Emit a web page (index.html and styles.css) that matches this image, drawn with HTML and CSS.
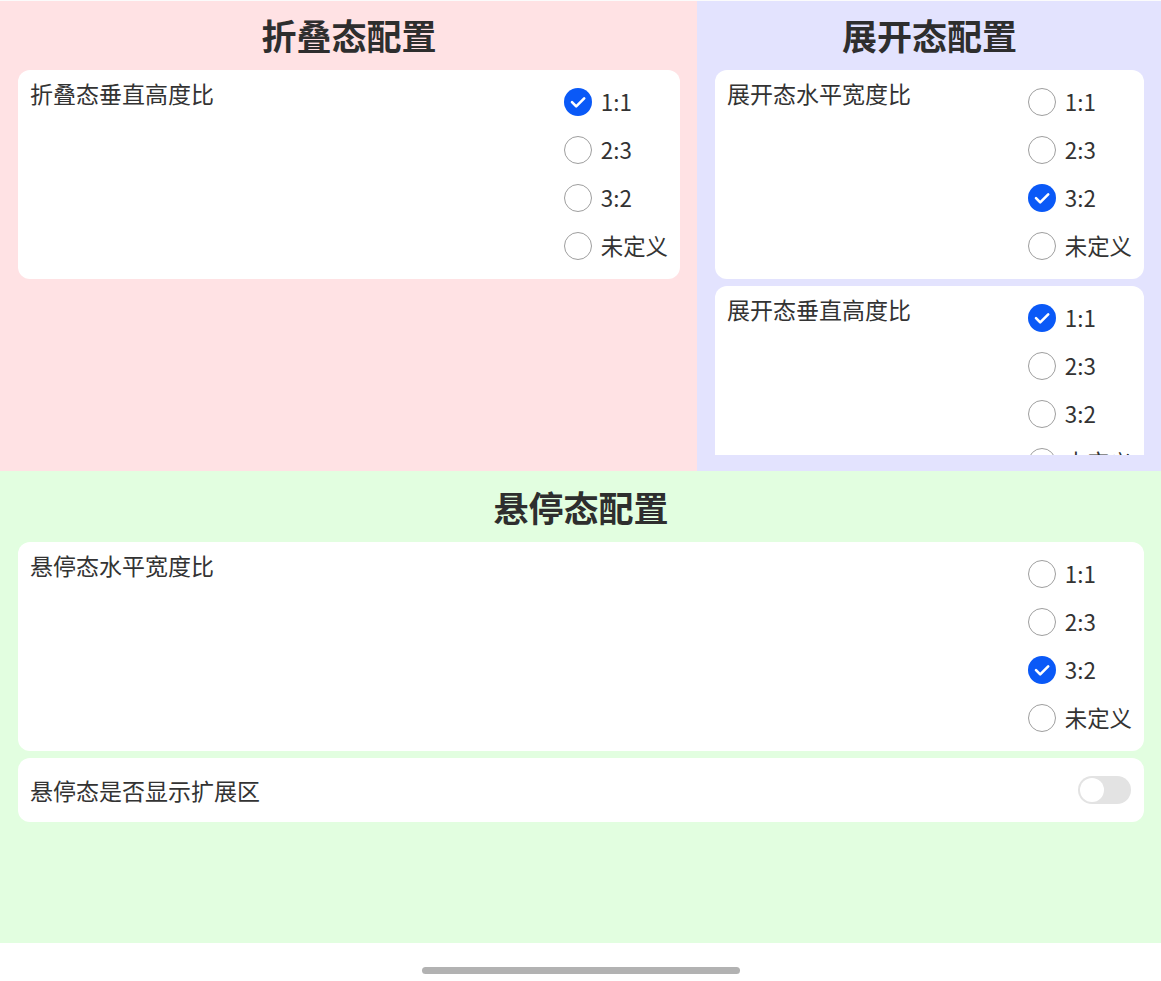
FILE: index.html
```html
<!DOCTYPE html>
<html lang="zh-CN">
<head>
<meta charset="utf-8">
<title>配置</title>
<link rel="stylesheet" href="styles.css">
</head>
<body>
<div class="screen">
  <div class="top">
    <section class="panel fold">
      <h2 class="title">折叠态配置</h2>
      <div class="scroll">
        <div class="card">
          <div class="label">折叠态垂直高度比</div>
          <div class="radios">
            <div class="radio"><span class="dot on"><svg viewBox="0 0 28 28"><circle cx="14" cy="14" r="14" fill="#0a59f7"/><path d="M8 14.2l4.2 4.2 8-8" fill="none" stroke="#fff" stroke-width="2.6" stroke-linecap="round" stroke-linejoin="round"/></svg></span><span class="rtext">1:1</span></div>
            <div class="radio"><span class="dot"></span><span class="rtext">2:3</span></div>
            <div class="radio"><span class="dot"></span><span class="rtext">3:2</span></div>
            <div class="radio"><span class="dot"></span><span class="rtext">未定义</span></div>
          </div>
        </div>
      </div>
    </section>
    <section class="panel expand">
      <h2 class="title">展开态配置</h2>
      <div class="scroll">
        <div class="card">
          <div class="label">展开态水平宽度比</div>
          <div class="radios">
            <div class="radio"><span class="dot"></span><span class="rtext">1:1</span></div>
            <div class="radio"><span class="dot"></span><span class="rtext">2:3</span></div>
            <div class="radio"><span class="dot on"><svg viewBox="0 0 28 28"><circle cx="14" cy="14" r="14" fill="#0a59f7"/><path d="M8 14.2l4.2 4.2 8-8" fill="none" stroke="#fff" stroke-width="2.6" stroke-linecap="round" stroke-linejoin="round"/></svg></span><span class="rtext">3:2</span></div>
            <div class="radio"><span class="dot"></span><span class="rtext">未定义</span></div>
          </div>
        </div>
        <div class="card">
          <div class="label">展开态垂直高度比</div>
          <div class="radios">
            <div class="radio"><span class="dot on"><svg viewBox="0 0 28 28"><circle cx="14" cy="14" r="14" fill="#0a59f7"/><path d="M8 14.2l4.2 4.2 8-8" fill="none" stroke="#fff" stroke-width="2.6" stroke-linecap="round" stroke-linejoin="round"/></svg></span><span class="rtext">1:1</span></div>
            <div class="radio"><span class="dot"></span><span class="rtext">2:3</span></div>
            <div class="radio"><span class="dot"></span><span class="rtext">3:2</span></div>
            <div class="radio"><span class="dot"></span><span class="rtext">未定义</span></div>
          </div>
        </div>
      </div>
    </section>
  </div>
  <section class="panel hover">
    <h2 class="title">悬停态配置</h2>
    <div class="scroll">
      <div class="card">
        <div class="label">悬停态水平宽度比</div>
        <div class="radios">
          <div class="radio"><span class="dot"></span><span class="rtext">1:1</span></div>
          <div class="radio"><span class="dot"></span><span class="rtext">2:3</span></div>
          <div class="radio"><span class="dot on"><svg viewBox="0 0 28 28"><circle cx="14" cy="14" r="14" fill="#0a59f7"/><path d="M8 14.2l4.2 4.2 8-8" fill="none" stroke="#fff" stroke-width="2.6" stroke-linecap="round" stroke-linejoin="round"/></svg></span><span class="rtext">3:2</span></div>
          <div class="radio"><span class="dot"></span><span class="rtext">未定义</span></div>
        </div>
      </div>
      <div class="card switch-card">
        <div class="label">悬停态是否显示扩展区</div>
        <div class="toggle"><span class="knob"></span></div>
      </div>
    </div>
  </section>
  <div class="nav"><div class="bar"></div></div>
</div>
</body>
</html>
```
FILE: styles.css
```css
* { box-sizing: border-box; }
html, body { margin: 0; padding: 0; background: #fff; }
body {
  font-family: "Noto Sans CJK SC", "Noto Sans", sans-serif;
  color: #333;
}
.screen {
  width: 1161px;
  height: 981px;
  display: flex;
  flex-direction: column;
  padding-top: 1px;
  background: #fbfbfb;
}
.top {
  display: flex;
  height: 470px;
}
.panel {
  display: flex;
  flex-direction: column;
  padding: 0 17px 16px 18px;
}
.fold { width: 697px; background: #ffe2e4; }
.expand { flex: 1; background: #e3e3fe; }
.hover { height: 472px; background: #e2fee0; }
.title {
  margin: 0;
  height: 69px;
  flex: none;
  font-size: 35px;
  line-height: 68px;
  font-weight: 700;
  text-align: center;
  color: #2e2e2e;
  letter-spacing: 0;
}
.hover .title { height: 71px; line-height: 72px; }
.scroll {
  flex: 1;
  min-height: 0;
  overflow: hidden;
  display: flex;
  flex-direction: column;
  gap: 7px;
}
.card {
  flex: none;
  background: #fff;
  border-radius: 12px;
  display: flex;
  justify-content: space-between;
  align-items: flex-start;
  padding: 8px 12px 9px 12px;
}
.label {
  font-size: 23px;
  line-height: 30px;
  padding-top: 0;
  color: #333;
}
.radios { display: flex; flex-direction: column; }
.radio {
  height: 48px;
  display: flex;
  align-items: center;
  gap: 9px;
}
.dot {
  width: 28px;
  height: 28px;
  border-radius: 50%;
  border: 1.6px solid #9e9e9e;
  flex: none;
  display: block;
}
.dot.on { border: none; }
.dot svg { display: block; width: 28px; height: 28px; }
.rtext {
  font-size: 22.4px;
  line-height: 30px;
  color: #333;
  position: relative;
  top: -1px;
}
.switch-card {
  height: 64px;
  align-items: center;
  padding: 0 13px 0 12px;
}
.switch-card .label { padding-top: 0; }
.toggle {
  width: 53px;
  height: 28px;
  border-radius: 14px;
  background: #e3e3e3;
  padding: 2px;
  display: flex;
  align-items: center;
}
.knob {
  width: 24px;
  height: 24px;
  border-radius: 50%;
  background: #fff;
}
.nav {
  flex: 1;
  background: #fff;
  display: flex;
  justify-content: center;
  padding-top: 24px;
}
.bar {
  width: 318px;
  height: 7px;
  border-radius: 4px;
  background: #b2b2b2;
}
```
